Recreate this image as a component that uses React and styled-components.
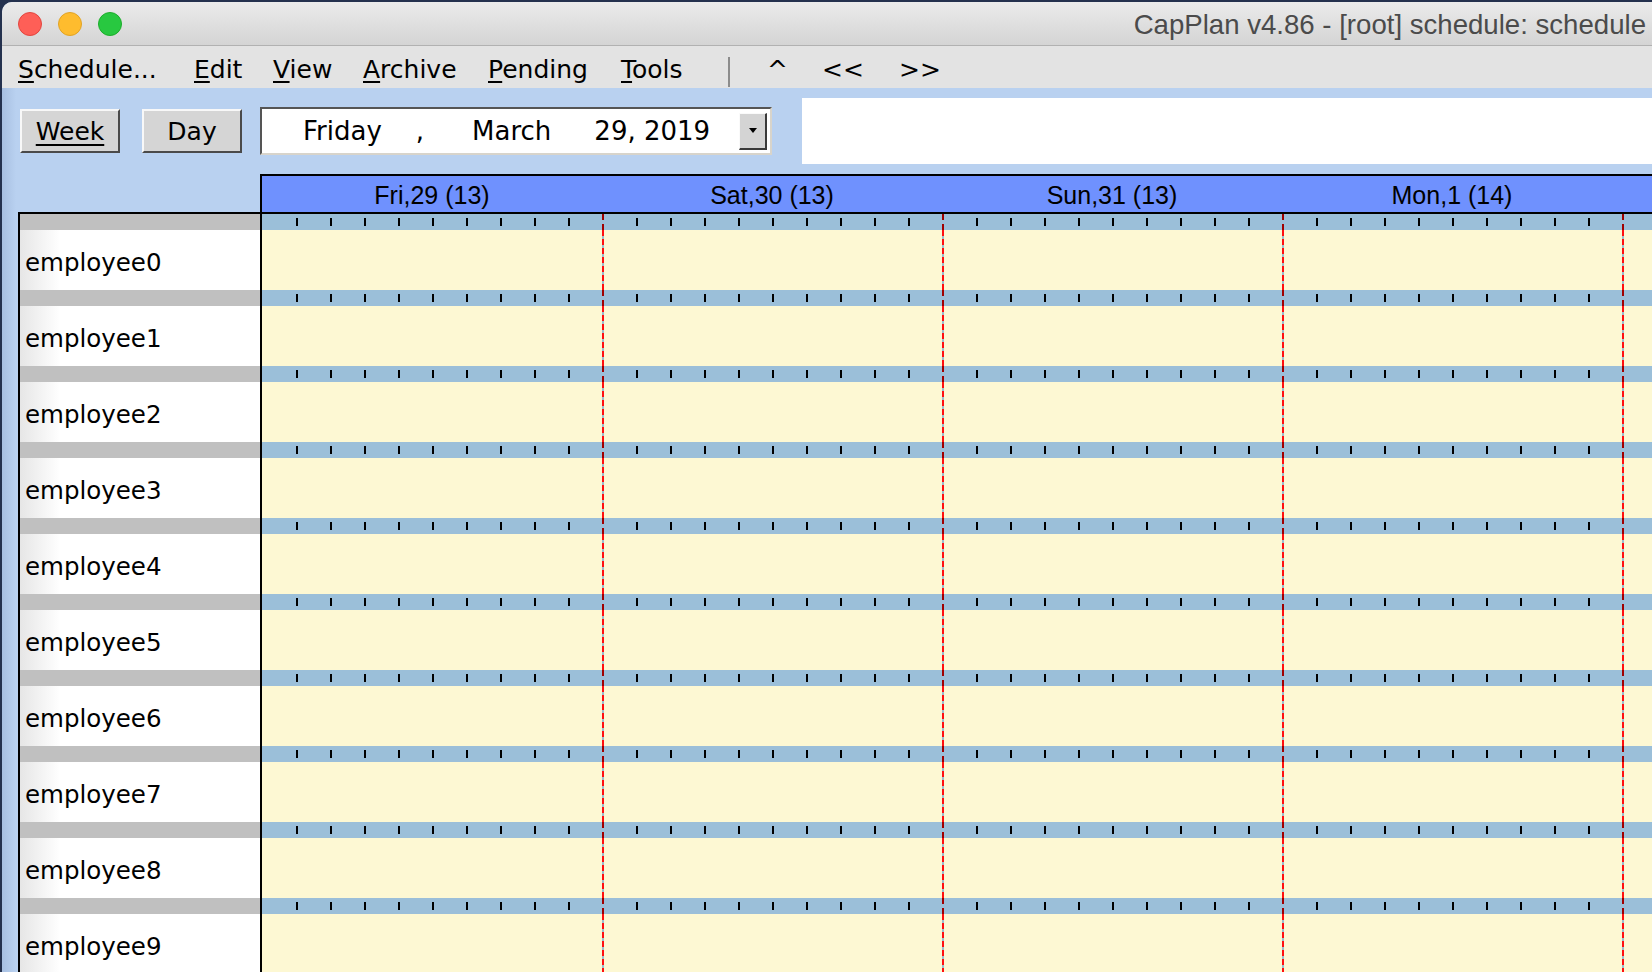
import React from "react";
import styled, { createGlobalStyle } from "styled-components";

const GlobalStyle = createGlobalStyle`
  html, body { margin: 0; padding: 0; background: #24314e; overflow: hidden; }
  #root { width: 1652px; height: 972px; }
  * { box-sizing: border-box; }
`;

const UI_FONT = `"DejaVu Sans", "Liberation Sans", sans-serif`;

const Desktop = styled.div`
  width: 1652px;
  height: 972px;
  padding: 2px 0 0 2px;
  overflow: hidden;
  background: #24314e;
`;

const Window = styled.div`
  width: 1650px;
  height: 970px;
  display: flex;
  flex-direction: column;
  border-top-left-radius: 10px;
  overflow: hidden;
  background: #b9d1f0;
`;

const TitleBar = styled.div`
  height: 44px;
  flex: none;
  display: flex;
  align-items: center;
  padding: 0 6px 0 16px;
  background: linear-gradient(#ebebeb, #d4d4d4);
  border-bottom: 1px solid #b1b1b1;
`;

const Lights = styled.div`
  display: flex;
  gap: 16px;
`;

const Light = styled.span`
  width: 24px;
  height: 24px;
  border-radius: 50%;
  background: ${(p) => p.$fill};
  border: 1px solid ${(p) => p.$edge};
`;

const Title = styled.div`
  margin-left: auto;
  padding-top: 3px;
  font-family: "Liberation Sans", Arial, sans-serif;
  font-size: 27.6px;
  color: #4b4b4b;
  white-space: nowrap;
`;

const MenuBar = styled.div`
  height: 42px;
  flex: none;
  display: flex;
  align-items: center;
  padding-left: 16px;
  background: #e3e3e3;
  font-family: ${UI_FONT};
  font-size: 25px;
  color: #000;
  white-space: nowrap;
`;

const MenuItem = styled.span`
  width: ${(p) => p.$w}px;
  flex: none;
  line-height: 42px;
  padding-top: 6px;
`;

const Mnemonic = styled.span`
  text-decoration: underline;
  text-decoration-thickness: 2px;
  text-underline-offset: 3px;
`;

const MenuSeparator = styled.span`
  align-self: flex-end;
  flex: none;
  width: 2px;
  height: 30px;
  margin: 0 37px 1px 0;
  background: #8c8c8c;
`;

const NavButton = styled.span`
  width: ${(p) => p.$w}px;
  flex: none;
  line-height: 42px;
  padding-top: 6px;
`;

const Body = styled.div`
  flex: 1;
  display: flex;
  flex-direction: column;
  background: linear-gradient(to right, #a7bfe1 0px, #b9d1f0 14px);
  overflow: hidden;
`;

const Toolbar = styled.div`
  height: 66px;
  margin-top: 10px;
  flex: none;
  display: flex;
  align-items: center;
  padding-left: 18px;
`;

const ToolButton = styled.button`
  width: 100px;
  height: 44px;
  margin-right: ${(p) => p.$gap}px;
  padding: 0;
  background: #d5d5d5;
  border: 2px solid;
  border-color: #f8f8f8 #4a4a4a #4a4a4a #f8f8f8;
  font-family: ${UI_FONT};
  font-size: 25px;
  color: #000;
  text-decoration: ${(p) => (p.$underline ? "underline" : "none")};
  text-decoration-thickness: 2px;
  text-underline-offset: 4px;
`;

const Combo = styled.div`
  width: 512px;
  height: 48px;
  display: flex;
  align-items: center;
  background: #fff;
  border: 2px solid;
  border-color: #555 #d8d4cb #d8d4cb #555;
`;

const DateText = styled.div`
  flex: 1;
  display: flex;
  padding-left: 41px;
  font-family: ${UI_FONT};
  font-size: 26px;
  color: #000;
  white-space: nowrap;
`;

const DateSeg = styled.span`
  margin-left: ${(p) => p.$ml || 0}px;
`;

const DropButton = styled.div`
  width: 28px;
  height: 37px;
  margin-right: 3px;
  display: flex;
  align-items: center;
  justify-content: center;
  background: #d4d4d4;
  border-style: solid;
  border-width: 1px 2px 2px 1px;
  border-color: #fafafa #3a3a3a #3a3a3a #fafafa;
`;

const Arrow = styled.span`
  width: 0;
  height: 0;
  border-left: 4px solid transparent;
  border-right: 4px solid transparent;
  border-top: 5px solid #000;
`;

const InfoBox = styled.div`
  flex: 1;
  align-self: stretch;
  margin-left: 30px;
  background: #fff;
`;

const Schedule = styled.div`
  margin-top: 10px;
  display: flex;
  flex-direction: column;
`;

const HeaderRow = styled.div`
  display: flex;
  padding-left: 258px;
`;

const HeaderBar = styled.div`
  flex: none;
  display: flex;
  height: 38px;
  border: 2px solid #000;
  border-bottom: none;
  border-right: none;
  background: #6f91fe;
`;

const DayHead = styled.div`
  width: 340px;
  flex: none;
  text-align: center;
  line-height: 36px;
  padding-top: 1px;
  font-family: "Liberation Sans", Arial, sans-serif;
  font-size: 25px;
  color: #000;
`;

const Table = styled.div`
  margin-left: 16px;
  display: flex;
  flex-direction: column;
  border-left: 2px solid #000;
  border-top: 2px solid #000;
`;

const Row = styled.div`
  display: flex;
  flex: none;
  height: 76px;
`;

const LabelCell = styled.div`
  width: 242px;
  flex: none;
  display: flex;
  flex-direction: column;
  border-right: 2px solid #000;
`;

const LabelBand = styled.div`
  height: 16px;
  background: #c0c0c0;
`;

const Name = styled.div`
  height: 60px;
  display: flex;
  align-items: center;
  padding: 5px 0 0 5px;
  background: linear-gradient(to right, #e6e6e6 0px, #ffffff 40px);
  font-family: ${UI_FONT};
  font-size: 24.5px;
  color: #000;
`;

const DayCell = styled.div`
  width: 340px;
  flex: none;
  display: flex;
  flex-direction: column;
  position: relative;

  &::before {
    content: "";
    display: ${(p) => (p.$divider ? "block" : "none")};
    position: absolute;
    left: 0;
    top: 0;
    bottom: 0;
    width: 2px;
    background:
      repeating-linear-gradient(to bottom, #a00000 0 6px, transparent 6px 10px) 0 0 / 2px 16px no-repeat,
      repeating-linear-gradient(to bottom, #ff1010 0 6px, #9cbccc 6px 9px) 0 16px / 2px 60px no-repeat;
  }
`;

const Band = styled.div`
  height: 16px;
  display: flex;
  align-items: center;
  gap: 32px;
  padding-left: 34px;
  background: #9bbfd9;
`;

const Tick = styled.span`
  width: 2px;
  height: 8px;
  flex: none;
  background: #000;
`;

const Slot = styled.div`
  height: 60px;
  background: #fdf8d3;
`;

const days = ["Fri,29 (13)", "Sat,30 (13)", "Sun,31 (13)", "Mon,1 (14)", ""];
const employees = Array.from({ length: 10 }, (_, i) => `employee${i}`);
const ticks = Array.from({ length: 9 }, (_, i) => i);

const menus = [
  ["S", "chedule...", 176],
  ["E", "dit", 79],
  ["V", "iew", 90],
  ["A", "rchive", 125],
  ["P", "ending", 133],
  ["T", "ools", 107],
];

export default function App() {
  return (
    <>
      <GlobalStyle />
      <Desktop>
        <Window>
          <TitleBar>
            <Lights>
              <Light $fill="#fe5f57" $edge="#e2463f" />
              <Light $fill="#febc2e" $edge="#e1a325" />
              <Light $fill="#28c840" $edge="#1dad2b" />
            </Lights>
            <Title>CapPlan v4.86 - [root] schedule: schedule</Title>
          </TitleBar>
          <MenuBar>
            {menus.map(([m, rest, w]) => (
              <MenuItem key={m} $w={w}>
                <Mnemonic>{m}</Mnemonic>
                {rest}
              </MenuItem>
            ))}
            <MenuSeparator />
            <NavButton $w={55}>^</NavButton>
            <NavButton $w={77}>&lt;&lt;</NavButton>
            <NavButton $w={60}>&gt;&gt;</NavButton>
          </MenuBar>
          <Body>
            <Toolbar>
              <ToolButton $underline $gap={22}>Week</ToolButton>
              <ToolButton $gap={18}>Day</ToolButton>
              <Combo>
                <DateText>
                  <DateSeg>Friday</DateSeg>
                  <DateSeg $ml={34}>,</DateSeg>
                  <DateSeg $ml={48}>March</DateSeg>
                  <DateSeg $ml={43}>29, 2019</DateSeg>
                </DateText>
                <DropButton>
                  <Arrow />
                </DropButton>
              </Combo>
              <InfoBox />
            </Toolbar>
            <Schedule>
              <HeaderRow>
                <HeaderBar>
                  {days.map((d, i) => (
                    <DayHead key={i}>{d}</DayHead>
                  ))}
                </HeaderBar>
              </HeaderRow>
              <Table>
                {employees.map((name) => (
                  <Row key={name}>
                    <LabelCell>
                      <LabelBand />
                      <Name>{name}</Name>
                    </LabelCell>
                    {days.map((d, i) => (
                      <DayCell key={i} $divider={i > 0}>
                        <Band>
                          {ticks.map((t) => (
                            <Tick key={t} />
                          ))}
                        </Band>
                        <Slot />
                      </DayCell>
                    ))}
                  </Row>
                ))}
              </Table>
            </Schedule>
          </Body>
        </Window>
      </Desktop>
    </>
  );
}
